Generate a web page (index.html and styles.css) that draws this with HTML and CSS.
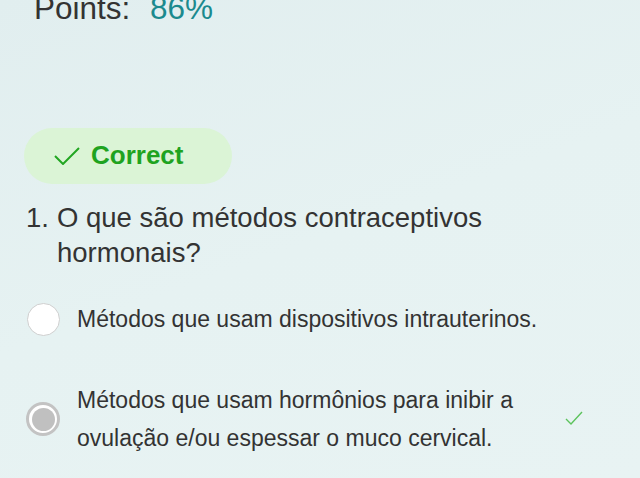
FILE: index.html
```html
<!DOCTYPE html>
<html lang="pt">
<head>
    <meta charset="UTF-8">
    <meta name="viewport" content="width=device-width, initial-scale=1.0">
    <link rel="stylesheet" href="styles.css">
</head>
<body>
    <div class="container">
        <div class="points">
            <span class="points-label">Points:</span>
            <span class="points-value">86%</span>
        </div>

        <div class="result">
            <svg class="result-icon" width="26" height="18" viewBox="0 0 26 18">
                <polyline points="1,9 9,17 25,1" fill="none" stroke="#22a622" stroke-width="2"/>
            </svg>
            <span class="result-text">Correct</span>
        </div>

        <div class="question">
            <span class="question-num">1.</span>
            <span class="question-text">O que são métodos contraceptivos hormonais?</span>
        </div>

        <div class="options">
            <div class="option">
                <span class="radio"></span>
                <span class="option-text">Métodos que usam dispositivos intrauterinos.</span>
            </div>
            <div class="option option-picked">
                <span class="radio radio-checked"><span class="radio-dot"></span></span>
                <span class="option-text">Métodos que usam hormônios para inibir a ovulação e/ou espessar o muco cervical.</span>
                <svg class="option-mark" width="18" height="15" viewBox="0 0 18 15">
                    <polyline points="1,8 6,13 17,1" fill="none" stroke="#5cc35c" stroke-width="1.4"/>
                </svg>
            </div>
        </div>
    </div>
</body>
</html>
```

FILE: styles.css
```css
/* quiz result card */
body {
    margin: 0;
    padding: 0;
    font-family: "Liberation Sans", Arial, sans-serif;
    color: #333;
    background: linear-gradient(160deg, #e1eeef 0%, #e6f2f2 50%, #e8f3f3 100%);
    height: 478px;
    overflow: hidden;
}
.container {
    padding-left: 24px;
}
.points {
    margin-top: -10px;
    padding-left: 10px;
    font-size: 31.5px;
    line-height: 36px;
    color: #333;
}
.points-value {
    margin-left: 11px;
    color: #1b8a8e;
}
.result {
    display: flex;
    align-items: center;
    width: 208px;
    height: 56px;
    margin-top: 102px;
    box-sizing: border-box;
    padding: 0 0 2px 30px;
    border-radius: 28px;
    background-color: #dbf4d6;
}
.result-icon {
    margin-right: 11px;
    margin-top: 2px;
}
.result-text {
    font-size: 26px;
    font-weight: bold;
    line-height: 26px;
    color: #1fa31f;
}
.question {
    display: flex;
    margin-top: 16px;
    padding-left: 2px;
    font-size: 27.5px;
    line-height: 35px;
    color: #333;
}
.question-num {
    flex: 0 0 31px;
}
.question-text {
    width: 440px;
}
.options {
    margin-top: 30px;
}
.option {
    display: flex;
    align-items: center;
    padding-left: 3px;
    font-size: 23px;
    line-height: 38px;
    color: #333;
}
.option-picked {
    margin-top: 43px;
}
.radio {
    flex: 0 0 auto;
    width: 33px;
    height: 33px;
    box-sizing: border-box;
    margin-right: 17px;
    border: 1px solid #cfcfcf;
    border-radius: 50%;
    background-color: #fff;
}
.radio-checked {
    display: flex;
    align-items: center;
    justify-content: center;
    width: 34px;
    height: 34px;
    margin-left: -1px;
    border: 3px solid #c3c3c3;
}
.radio-dot {
    width: 23px;
    height: 23px;
    border-radius: 50%;
    background-color: #c0c0c0;
}
.option-text {
    width: 470px;
}
.option-mark {
    margin-left: 18px;
    margin-top: -2px;
}
```
